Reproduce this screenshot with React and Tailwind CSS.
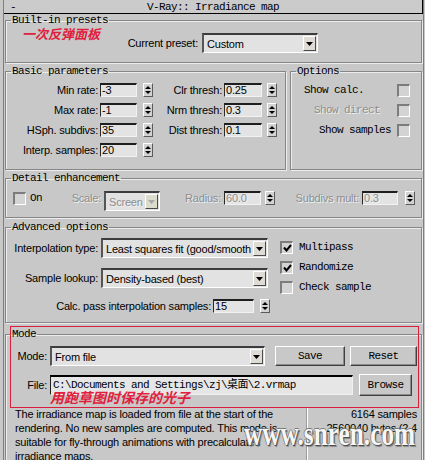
import React from 'react';

const mono = "font-['Liberation_Mono','Noto_Sans_CJK_SC',monospace] text-[11px] tracking-[-0.6px]";
const cjk = "font-['Noto_Sans_CJK_SC',sans-serif] font-bold italic tracking-normal text-[#e0203c]";
const dis = "text-[#8e8e8e] [text-shadow:1px_1px_0_#efefef]";

function Group({ title, className = '', children }) {
  return (
    <fieldset className={`min-w-0 shrink-0 border border-[#868686] shadow-[inset_1px_1px_0_#ececec,1px_1px_0_#ececec] ${className}`}>
      <legend className={`ml-[5px] px-[1px] leading-[12px] ${mono}`}>{title}</legend>
      {children}
    </fieldset>
  );
}

function Field({ value, disabled, className = '' }) {
  return (
    <div
      className={`h-[14px] shrink-0 overflow-hidden whitespace-nowrap border-t-2 border-l border-b border-r border-t-[#1e1e1e] border-l-[#2a2a2a] border-b-[#f2f2f2] border-r-[#f2f2f2] bg-[#e3e3e3] pl-[1px] leading-[11px] ${disabled ? dis : 'text-black'} ${className}`}
    >
      {value}
    </div>
  );
}

function Spinner({ className = '' }) {
  return (
    <div className={`flex h-[14px] w-[10px] shrink-0 flex-col items-center justify-center gap-[2px] border border-t-white border-l-white border-b-[#5a5a5a] border-r-[#5a5a5a] bg-[#d2d2d2] ${className}`}>
      <svg width="6" height="3" viewBox="0 0 6 3"><path d="M3 0L6 3H0z" fill="#000" /></svg>
      <svg width="6" height="3" viewBox="0 0 6 3"><path d="M0 0H6L3 3z" fill="#000" /></svg>
    </div>
  );
}

function Check({ checked, className = '' }) {
  return (
    <div className={`flex h-[13px] w-[13px] shrink-0 items-center justify-center border-t-2 border-l-2 border-b border-r border-t-[#7c7c7c] border-l-[#7c7c7c] border-b-white border-r-white bg-[#d3d3d3] ${className}`}>
      {checked && (
        <svg width="9" height="8" viewBox="0 0 9 8">
          <path d="M1 3.5L3.5 6.5L8 1" stroke="#000" strokeWidth="2" fill="none" />
        </svg>
      )}
    </div>
  );
}

function Dropdown({ value, disabled, className = '' }) {
  return (
    <div className={`flex h-[20px] shrink-0 items-center border-t-2 border-l-2 border-b border-r border-t-[#3c3c3c] border-l-[#555555] border-b-white border-r-white bg-[#e2e2e2] pl-[3px] pr-[1px] ${className}`}>
      <span className={`flex-1 overflow-hidden whitespace-nowrap leading-[16px] ${disabled ? dis : ''}`}>{value}</span>
      <div className={`flex h-[15px] w-[13px] shrink-0 items-center justify-center border border-t-white border-l-white border-b-[#4a4a4a] border-r-[#4a4a4a] ${disabled ? 'bg-[#dcdccc]' : 'bg-[#dedcd4]'}`}>
        <svg width="7" height="4" viewBox="0 0 7 4"><path d="M0 0H7L3.5 4z" fill={disabled ? '#a8a8a8' : '#000'} /></svg>
      </div>
    </div>
  );
}

function Btn({ children, className = '' }) {
  return (
    <div className={`flex shrink-0 items-center justify-center border border-t-white border-l-white border-b-[#404040] border-r-[#404040] bg-[#c8c8c8] shadow-[inset_-1px_-1px_0_#8a8a8a] ${mono} ${className}`}>
      {children}
    </div>
  );
}

const basic = [
  ['Min rate:', '-3', 'Clr thresh:', '0.25'],
  ['Max rate:', '-1', 'Nrm thresh:', '0.3'],
  ['HSph. subdivs:', '35', 'Dist thresh:', '0.1'],
  ['Interp. samples:', '20'],
];

export default function App() {
  return (
    <div className="relative h-[460px] w-[425px] overflow-hidden bg-[#c8c8c8] font-['Liberation_Sans',Arial,sans-serif] text-[11px] tracking-[-0.2px] text-black">
      <div className="ml-[3px] flex h-full w-[421px] flex-col border-x border-x-[#7e7e7e]">
        {/* rollout title */}
        <div className={`grid h-[14px] shrink-0 grid-cols-[20px_1fr_20px] items-center border-b border-r border-b-black border-r-black bg-[#cbcbcb] leading-[12px] ${mono}`}>
          <span className="pl-[6px]">-</span>
          <span className="text-center">V-Ray:: Irradiance map</span>
        </div>

        <Group title="Built-in presets" className="mx-[1px]">
          <div className="flex h-[36px] items-start">
            <span className={`ml-[16px] mt-[1px] w-[78px] whitespace-nowrap text-[13px] leading-[14px] ${cjk}`}>一次反弹面板</span>
            <span className="mt-[7px] w-[98px] whitespace-nowrap text-right leading-[20px]">Current preset:</span>
            <Dropdown value="Custom" className="ml-[4px] mt-[7px] w-[116px]" />
          </div>
        </Group>

        <div className="mx-[1px] mt-[2px] flex shrink-0">
          <Group title="Basic parameters" className="w-[281px]">
            <div className="flex h-[92px] flex-col gap-[6px] pt-[6px]">
              {basic.map(([l, v, l2, v2]) => (
                <div key={l} className="flex h-[14px] items-center">
                  <span className="w-[92px] whitespace-nowrap text-right leading-[14px]">{l}</span>
                  <Field value={v} className="ml-[2px] w-[37px]" />
                  <Spinner className="ml-[6px]" />
                  {l2 && (
                    <>
                      <span className="w-[69px] whitespace-nowrap text-right leading-[14px]">{l2}</span>
                      <Field value={v2} className="ml-[2px] w-[38px]" />
                      <Spinner className="ml-[5px]" />
                    </>
                  )}
                </div>
              ))}
            </div>
          </Group>
          <Group title="Options" className="ml-[4px] flex-1">
            <div className={`flex h-[92px] flex-col gap-[6px] pt-[6px] ${mono}`}>
              <div className="flex h-[14px] items-center">
                <span className="ml-[13px]">Show calc.</span>
                <Check className="ml-auto mr-[11px]" />
              </div>
              <div className="flex h-[14px] items-center">
                <span className={`ml-[23px] ${dis}`}>Show direct</span>
                <Check className="ml-auto mr-[11px]" />
              </div>
              <div className="flex h-[14px] items-center">
                <span className="ml-[28px]">Show samples</span>
                <Check className="ml-auto mr-[11px]" />
              </div>
            </div>
          </Group>
        </div>

        <Group title="Detail enhancement" className="mx-[1px] mt-[2px]">
          <div className="flex h-[33px] items-start pt-[7px]">
            <Check className="ml-[7px] mt-[1px]" />
            <span className={`ml-[4px] leading-[14px] ${mono}`}>On</span>
            <span className={`w-[59px] text-right leading-[14px] ${dis}`}>Scale:</span>
            <Dropdown value="Screen" disabled className="ml-[3px] w-[56px]" />
            <span className={`w-[61px] text-right leading-[14px] ${dis}`}>Radius:</span>
            <Field value="60.0" disabled className="ml-[3px] w-[37px]" />
            <Spinner className="ml-[4px]" />
            <span className={`w-[84px] whitespace-nowrap text-right leading-[14px] ${dis}`}>Subdivs mult:</span>
            <Field value="0.3" disabled className="ml-[3px] w-[36px]" />
            <Spinner className="ml-[7px]" />
          </div>
        </Group>

        <Group title="Advanced options" className="mx-[1px] mt-[3px]">
          <div className="flex h-[89px]">
            <div className="flex w-[264px] flex-col pt-[5px]">
              <div className="flex items-center">
                <span className="w-[92px] whitespace-nowrap text-right">Interpolation type:</span>
                <Dropdown value="Least squares fit (good/smooth" className="ml-[3px] w-[167px]" />
              </div>
              <div className="mt-[10px] flex items-center">
                <span className="w-[92px] whitespace-nowrap text-right">Sample lookup:</span>
                <Dropdown value="Density-based (best)" className="ml-[3px] w-[167px]" />
              </div>
              <div className="mt-[10px] flex items-center">
                <span className="w-[205px] whitespace-nowrap text-right">Calc. pass interpolation samples:</span>
                <Field value="15" className="ml-[2px] w-[41px]" />
                <Spinner className="ml-[6px]" />
              </div>
            </div>
            <div className={`flex flex-col gap-[7px] pl-[10px] pt-[8px] ${mono}`}>
              <div className="flex h-[13px] items-center">
                <Check checked />
                <span className="ml-[6px]">Multipass</span>
              </div>
              <div className="flex h-[13px] items-center">
                <Check checked />
                <span className="ml-[6px]">Randomize</span>
              </div>
              <div className="flex h-[13px] items-center">
                <Check />
                <span className="ml-[6px]">Check sample</span>
              </div>
            </div>
          </div>
        </Group>

        <Group title="Mode" className="mx-[1px] mt-[5px]">
          <div className="flex h-[160px] flex-col">
            <div className="mt-[6px] flex items-center">
              <span className="w-[41px] text-right">Mode:</span>
              <Dropdown value="From file" className="ml-[3px] w-[215px]" />
              <Btn className="ml-[10px] h-[20px] w-[70px]">Save</Btn>
              <Btn className="ml-[5px] h-[20px] w-[67px]">Reset</Btn>
            </div>
            <div className="mt-[8px] flex items-center">
              <span className="w-[41px] text-right">File:</span>
              <div className={`ml-[3px] h-[20px] w-[303px] shrink-0 overflow-hidden whitespace-nowrap border-t-2 border-l border-b border-r border-t-black border-l-[#202020] border-b-[#f0f0f0] border-r-[#f0f0f0] bg-[#e6e6e6] pl-[2px] leading-[16px] ${mono}`}>
                C:\Documents and Settings\zj\桌面\2.vrmap
              </div>
              <Btn className="ml-[6px] h-[22px] w-[53px]">Browse</Btn>
            </div>
            <div className={`-mt-[7px] whitespace-nowrap pl-[44px] text-[14px] leading-[16px] ${cjk}`}>用跑草图时保存的光子</div>
            <div className="mt-[2px] flex">
              <div className="w-[301px] overflow-hidden whitespace-nowrap border-r border-r-[#9a9a9a] pl-[9px] leading-[14px]">
                The irradiance map is loaded from file at the start of the
                <br />
                rendering. No new samples are computed. This mode is
                <br />
                suitable for fly-through animations with precalculated
                <br />
                irradiance maps.
              </div>
              <div className="flex-1 overflow-hidden whitespace-nowrap border-l border-l-white pr-[4px] text-right leading-[14px]">
                6164 samples
                <br />
                2560040 bytes (2.4
              </div>
            </div>
          </div>
        </Group>
      </div>

      {/* annotation frame */}
      <div className="pointer-events-none absolute left-[10px] top-[326px] h-[82px] w-[409px] border border-[#d8203c]" />

      {/* watermark */}
      <div className="pointer-events-none absolute left-[244px] top-[417px] origin-left scale-x-[0.745] whitespace-nowrap font-['Liberation_Serif',serif] text-[34px] font-bold leading-none tracking-normal text-[#f6f6f6] [text-shadow:1px_1px_0_#4e4e4e,-1px_0_0_#7a7a7a,0_-1px_0_#7a7a7a,2px_2px_1px_#8a8a8a]">
        www.snren.com
      </div>
    </div>
  );
}
